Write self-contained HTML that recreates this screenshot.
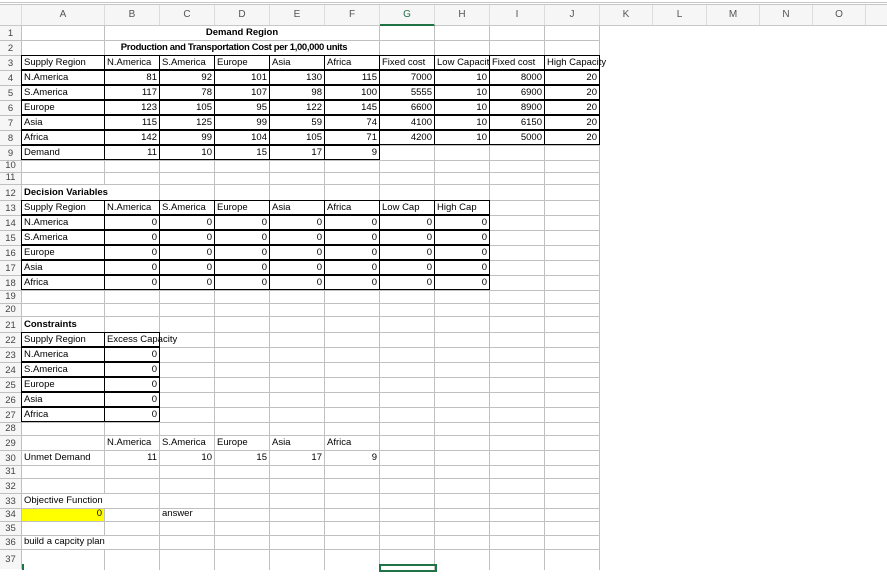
<!DOCTYPE html>
<html><head><meta charset="utf-8"><style>
*{margin:0;padding:0;box-sizing:border-box}
body{width:887px;height:570px;overflow:hidden;background:#fff;font-family:"Liberation Sans",Arial,sans-serif;font-size:9.5px;color:#000;position:relative}
.top{position:absolute;left:0;top:2px;width:887px;height:3px;border-top:1px solid #c6c6c6;border-bottom:1px solid #c6c6c6}
.hdr{position:absolute;left:0;top:5px;width:887px;height:21px;background:#f6f6f6;border-bottom:1px solid #c8c8c8}
.hc{position:absolute;top:0;height:20px;line-height:20px;text-align:center;color:#555;font-size:10px;border-right:1px solid #dcdcdc}
.sheet{position:absolute;left:0;top:26px;width:887px}
.vl{position:absolute;top:26px;width:1px;height:544px;background:#c0c0c0}
.r{position:relative;width:600px;border-bottom:1px solid #c0c0c0}
.rn{position:absolute;left:0;top:0;width:22px;height:100%;border-right:1px solid #c0c0c0;background:#f6f6f6;color:#444;font-size:9.5px;text-align:center;display:flex;align-items:flex-end;justify-content:center;padding-bottom:1px}
.c{position:absolute;top:-1px;height:calc(100% + 1px);border:1px solid transparent;white-space:nowrap;padding:0 2px;display:flex;align-items:flex-end;padding-bottom:1px}
.w{position:absolute;top:0;height:100%;background:#fff}
.k{border-color:#000}
.n{justify-content:flex-end}
.b{font-weight:bold}
.o{overflow:hidden}
.A{left:21px;width:84px}.B{left:104px;width:56px}.C{left:159px;width:56px}.D{left:214px;width:56px}.E{left:269px;width:56px}.F{left:324px;width:56px}.G{left:379px;width:56px}.H{left:434px;width:56px}.I{left:489px;width:56px}.J{left:544px;width:56px}
</style></head><body>
<div class="top"></div>
<div class="hdr">
<div class="hc" style="left:0;width:22px"></div>
<div class="hc" style="left:22px;width:83px">A</div>
<div class="hc" style="left:105px;width:55px">B</div>
<div class="hc" style="left:160px;width:55px">C</div>
<div class="hc" style="left:215px;width:55px">D</div>
<div class="hc" style="left:270px;width:55px">E</div>
<div class="hc" style="left:325px;width:55px">F</div>
<div class="hc" style="left:380px;width:55px;color:#217346;border-bottom:2px solid #217346;height:21px">G</div>
<div class="hc" style="left:435px;width:55px">H</div>
<div class="hc" style="left:490px;width:55px">I</div>
<div class="hc" style="left:545px;width:55px">J</div>
<div class="hc" style="left:600px;width:53px">K</div>
<div class="hc" style="left:653px;width:54px">L</div>
<div class="hc" style="left:707px;width:53px">M</div>
<div class="hc" style="left:760px;width:53px">N</div>
<div class="hc" style="left:813px;width:53px">O</div>
</div>
<div class="vl" style="left:104px"></div><div class="vl" style="left:159px"></div><div class="vl" style="left:214px"></div><div class="vl" style="left:269px"></div><div class="vl" style="left:324px"></div><div class="vl" style="left:379px"></div><div class="vl" style="left:434px"></div><div class="vl" style="left:489px"></div><div class="vl" style="left:544px"></div><div class="vl" style="left:599px"></div>
<div class="sheet">
<div class="r" style="height:15px"><div class="rn">1</div><div class="w" style="left:105px;width:274px"></div><div class="c b" style="left:104px;width:276px;justify-content:center">Demand Region</div></div>
<div class="r" style="height:15px"><div class="rn">2</div><div class="w" style="left:105px;width:274px"></div><div class="c b" style="left:104px;width:260px;justify-content:center;letter-spacing:-0.35px">Production and Transportation Cost per 1,00,000 units</div></div>
<div class="r" style="height:15px"><div class="rn">3</div><div class="c k A">Supply Region</div><div class="c k B">N.America</div><div class="c k C">S.America</div><div class="c k D">Europe</div><div class="c k E">Asia</div><div class="c k F">Africa</div><div class="c k G">Fixed cost</div><div class="c k H o">Low Capacity</div><div class="c k I">Fixed cost</div><div class="c k J">High Capacity</div></div>
<div class="r" style="height:15px"><div class="rn">4</div><div class="c k A">N.America</div><div class="c k n B">81</div><div class="c k n C">92</div><div class="c k n D">101</div><div class="c k n E">130</div><div class="c k n F">115</div><div class="c k n G">7000</div><div class="c k n H">10</div><div class="c k n I">8000</div><div class="c k n J">20</div></div>
<div class="r" style="height:15px"><div class="rn">5</div><div class="c k A">S.America</div><div class="c k n B">117</div><div class="c k n C">78</div><div class="c k n D">107</div><div class="c k n E">98</div><div class="c k n F">100</div><div class="c k n G">5555</div><div class="c k n H">10</div><div class="c k n I">6900</div><div class="c k n J">20</div></div>
<div class="r" style="height:15px"><div class="rn">6</div><div class="c k A">Europe</div><div class="c k n B">123</div><div class="c k n C">105</div><div class="c k n D">95</div><div class="c k n E">122</div><div class="c k n F">145</div><div class="c k n G">6600</div><div class="c k n H">10</div><div class="c k n I">8900</div><div class="c k n J">20</div></div>
<div class="r" style="height:15px"><div class="rn">7</div><div class="c k A">Asia</div><div class="c k n B">115</div><div class="c k n C">125</div><div class="c k n D">99</div><div class="c k n E">59</div><div class="c k n F">74</div><div class="c k n G">4100</div><div class="c k n H">10</div><div class="c k n I">6150</div><div class="c k n J">20</div></div>
<div class="r" style="height:15px"><div class="rn">8</div><div class="c k A">Africa</div><div class="c k n B">142</div><div class="c k n C">99</div><div class="c k n D">104</div><div class="c k n E">105</div><div class="c k n F">71</div><div class="c k n G">4200</div><div class="c k n H">10</div><div class="c k n I">5000</div><div class="c k n J">20</div></div>
<div class="r" style="height:15px"><div class="rn">9</div><div class="c k A">Demand</div><div class="c k n B">11</div><div class="c k n C">10</div><div class="c k n D">15</div><div class="c k n E">17</div><div class="c k n F">9</div></div>
<div class="r" style="height:12px"><div class="rn">10</div></div>
<div class="r" style="height:12px"><div class="rn">11</div></div>
<div class="r" style="height:16px"><div class="rn">12</div><div class="w" style="left:22px;width:137px"></div><div class="c b A">Decision Variables</div></div>
<div class="r" style="height:15px"><div class="rn">13</div><div class="c k A">Supply Region</div><div class="c k B">N.America</div><div class="c k C">S.America</div><div class="c k D">Europe</div><div class="c k E">Asia</div><div class="c k F">Africa</div><div class="c k G">Low Cap</div><div class="c k H">High Cap</div></div>
<div class="r" style="height:15px"><div class="rn">14</div><div class="c k A">N.America</div><div class="c k n B">0</div><div class="c k n C">0</div><div class="c k n D">0</div><div class="c k n E">0</div><div class="c k n F">0</div><div class="c k n G">0</div><div class="c k n H">0</div></div>
<div class="r" style="height:15px"><div class="rn">15</div><div class="c k A">S.America</div><div class="c k n B">0</div><div class="c k n C">0</div><div class="c k n D">0</div><div class="c k n E">0</div><div class="c k n F">0</div><div class="c k n G">0</div><div class="c k n H">0</div></div>
<div class="r" style="height:15px"><div class="rn">16</div><div class="c k A">Europe</div><div class="c k n B">0</div><div class="c k n C">0</div><div class="c k n D">0</div><div class="c k n E">0</div><div class="c k n F">0</div><div class="c k n G">0</div><div class="c k n H">0</div></div>
<div class="r" style="height:15px"><div class="rn">17</div><div class="c k A">Asia</div><div class="c k n B">0</div><div class="c k n C">0</div><div class="c k n D">0</div><div class="c k n E">0</div><div class="c k n F">0</div><div class="c k n G">0</div><div class="c k n H">0</div></div>
<div class="r" style="height:15px"><div class="rn">18</div><div class="c k A">Africa</div><div class="c k n B">0</div><div class="c k n C">0</div><div class="c k n D">0</div><div class="c k n E">0</div><div class="c k n F">0</div><div class="c k n G">0</div><div class="c k n H">0</div></div>
<div class="r" style="height:13px"><div class="rn">19</div></div>
<div class="r" style="height:13px"><div class="rn">20</div></div>
<div class="r" style="height:16px"><div class="rn">21</div><div class="c b A">Constraints</div></div>
<div class="r" style="height:15px"><div class="rn">22</div><div class="w" style="left:160px;width:54px"></div><div class="c k A">Supply Region</div><div class="c k B">Excess Capacity</div></div>
<div class="r" style="height:15px"><div class="rn">23</div><div class="c k A">N.America</div><div class="c k n B">0</div></div>
<div class="r" style="height:15px"><div class="rn">24</div><div class="c k A">S.America</div><div class="c k n B">0</div></div>
<div class="r" style="height:15px"><div class="rn">25</div><div class="c k A">Europe</div><div class="c k n B">0</div></div>
<div class="r" style="height:15px"><div class="rn">26</div><div class="c k A">Asia</div><div class="c k n B">0</div></div>
<div class="r" style="height:15px"><div class="rn">27</div><div class="c k A">Africa</div><div class="c k n B">0</div></div>
<div class="r" style="height:13px"><div class="rn">28</div></div>
<div class="r" style="height:15px"><div class="rn">29</div><div class="c B">N.America</div><div class="c C">S.America</div><div class="c D">Europe</div><div class="c E">Asia</div><div class="c F">Africa</div></div>
<div class="r" style="height:15px"><div class="rn">30</div><div class="c A">Unmet Demand</div><div class="c n B">11</div><div class="c n C">10</div><div class="c n D">15</div><div class="c n E">17</div><div class="c n F">9</div></div>
<div class="r" style="height:13px"><div class="rn">31</div></div>
<div class="r" style="height:15px"><div class="rn">32</div></div>
<div class="r" style="height:15px"><div class="rn">33</div><div class="w" style="left:22px;width:137px"></div><div class="c A">Objective Function</div></div>
<div class="r" style="height:13px"><div class="rn">34</div><div class="w" style="left:22px;width:82px;background:#ffff00"></div><div class="c n A">0</div><div class="c C">answer</div></div>
<div class="r" style="height:14px"><div class="rn">35</div></div>
<div class="r" style="height:14px"><div class="rn">36</div><div class="w" style="left:22px;width:137px"></div><div class="c A">build a capcity plan</div></div>
<div class="r" style="height:30px;border-bottom:none"><div class="rn" style="height:19px;align-items:center">37</div></div>
</div>
<div style="position:absolute;left:22px;top:564px;width:2px;height:6px;background:#217346"></div>
<div style="position:absolute;left:379px;top:564px;width:58px;height:8px;border:2px solid #217346"></div>
</body></html>
